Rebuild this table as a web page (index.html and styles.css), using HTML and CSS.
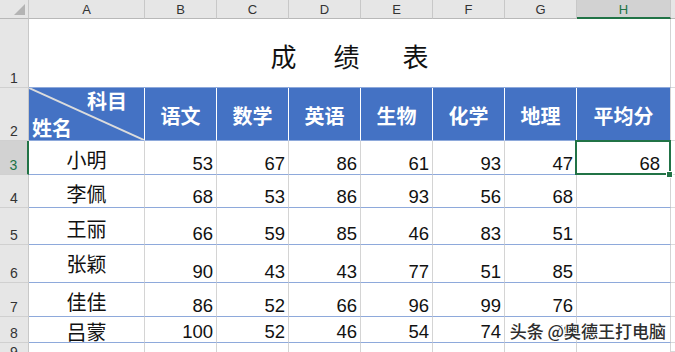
FILE: index.html
```html
<!DOCTYPE html>
<html lang="zh">
<head>
<meta charset="utf-8">
<title>成绩表</title>
<link rel="stylesheet" href="styles.css">
</head>
<body>
<div class="sheet">
  <div class="corner"><svg width="28" height="18" viewBox="0 0 28 18"><polygon points="25,4 25,15 14,15" fill="#b4b4b4"/></svg></div>
  <div class="ch">A</div><div class="ch">B</div><div class="ch">C</div><div class="ch">D</div><div class="ch">E</div><div class="ch">F</div><div class="ch">G</div><div class="ch sel-col">H</div><div class="ch ch-last"></div>

  <div class="rh">1</div>
  <div class="title"><span>成</span><span class="t2">绩</span><span class="t3">表</span></div>
  <div class="c blank"></div>

  <div class="rh">2</div>
  <div class="hd diag">
    <svg class="diag-line" viewBox="0 0 115 52" preserveAspectRatio="none"><line x1="0" y1="0" x2="115" y2="52" stroke="#dcdcdc" stroke-width="2"/></svg>
    <span class="diag-top">科目</span>
    <span class="diag-bot">姓名</span>
  </div>
  <div class="hd">语文</div><div class="hd">数学</div><div class="hd">英语</div><div class="hd">生物</div><div class="hd">化学</div><div class="hd">地理</div><div class="hd hd-last">平均分</div>
  <div class="c blank"></div>

  <div class="rh sel-row">3</div>
  <div class="c name">小明</div><div class="c num">53</div><div class="c num">67</div><div class="c num">86</div><div class="c num">61</div><div class="c num">93</div><div class="c num">47</div><div class="c num avg">68</div><div class="c blank"></div>

  <div class="rh">4</div>
  <div class="c name">李佩</div><div class="c num">68</div><div class="c num">53</div><div class="c num">86</div><div class="c num">93</div><div class="c num">56</div><div class="c num">68</div><div class="c num avg"></div><div class="c blank"></div>

  <div class="rh">5</div>
  <div class="c name">王丽</div><div class="c num">66</div><div class="c num">59</div><div class="c num">85</div><div class="c num">46</div><div class="c num">83</div><div class="c num">51</div><div class="c num avg"></div><div class="c blank"></div>

  <div class="rh">6</div>
  <div class="c name name-high">张颖</div><div class="c num">90</div><div class="c num">43</div><div class="c num">43</div><div class="c num">77</div><div class="c num">51</div><div class="c num">85</div><div class="c num avg"></div><div class="c blank"></div>

  <div class="rh">7</div>
  <div class="c name">佳佳</div><div class="c num">86</div><div class="c num">52</div><div class="c num">66</div><div class="c num">96</div><div class="c num">99</div><div class="c num">76</div><div class="c num avg"></div><div class="c blank"></div>

  <div class="rh">8</div>
  <div class="c name">吕蒙</div><div class="c num">100</div><div class="c num">52</div><div class="c num">46</div><div class="c num">54</div><div class="c num">74</div><div class="c num">76</div><div class="c num avg"></div><div class="c blank"></div>

  <div class="rh rh-cut">9</div>
  <div class="c e"></div><div class="c e"></div><div class="c e"></div><div class="c e"></div><div class="c e"></div><div class="c e"></div><div class="c e"></div><div class="c e"></div><div class="c blank"></div>

  <div class="selection"></div>
  <div class="handle"></div>
  <div class="watermark">头条 @奥德王打电脑</div>
</div>
</body>
</html>
```

FILE: styles.css
```css
html, body {
  margin: 0;
  padding: 0;
  background: #ffffff;
}
body {
  width: 675px;
  height: 352px;
  overflow: hidden;
  font-family: "Liberation Sans", "Noto Sans CJK SC", sans-serif;
}
.sheet {
  position: relative;
  height: 352px;
  overflow: hidden;
  display: grid;
  grid-template-columns: 29px 116px repeat(6, 72px) 94px 1fr;
  grid-template-rows: 19px 69px 53px 34px 33px 37px 38px 34px 26px 9px;
}
.sheet > div {
  box-sizing: border-box;
}
.corner {
  background: #e6e6e6;
  border-right: 1px solid #c8c8c8;
  border-bottom: 1px solid #b8b8b8;
}
.corner svg { display: block; }
.ch {
  background: #e6e6e6;
  border-right: 1px solid #c8c8c8;
  border-bottom: 1px solid #b8b8b8;
  font-size: 13px;
  color: #333;
  display: flex;
  align-items: center;
  justify-content: center;
  padding-top: 1px;
}
.ch-last { border-right: none; }
.sel-col {
  background: #d2d2d2;
  color: #217346;
  border-bottom: 2px solid #217346;
}
.rh {
  background: #e6e6e6;
  border-right: 1px solid #c8c8c8;
  border-bottom: 1px solid #d0d0d0;
  font-size: 14px;
  line-height: 16px;
  color: #333;
  display: flex;
  align-items: flex-end;
  justify-content: center;
  padding-bottom: 1px;
}
.rh-cut {
  align-items: flex-start;
  padding-top: 1px;
  border-bottom: none;
}
.sel-row {
  background: #d2d2d2;
  color: #217346;
  border-right: 2px solid #217346;
}
.title {
  grid-column: 2 / 10;
  border-right: 1px solid #d4d4d4;
  border-bottom: 1px solid #8ea9db;
  display: flex;
  align-items: center;
  justify-content: center;
  padding-top: 4px;
  font-family: "Noto Sans CJK SC", sans-serif;
  font-size: 26px;
  color: #111;
}
.title .t2 { margin-left: 37px; }
.title .t3 { margin-left: 43px; }
.c {
  border-right: 1px solid #d4d4d4;
  border-bottom: 1px solid #8ea9db;
}
.blank {
  border-right: none;
  border-bottom: 1px solid #dadada;
}
.hd {
  background: #4472c4;
  border-right: 1px solid #ffffff;
  border-bottom: 1px solid #8ea9db;
  color: #ffffff;
  font-family: "Noto Sans CJK SC", sans-serif;
  font-weight: bold;
  font-size: 20px;
  display: flex;
  align-items: center;
  justify-content: center;
  padding-top: 3px;
}
.hd-last { border-right: 1px solid #d4d4d4; }
.diag {
  position: relative;
  display: block;
  padding: 0;
}
.diag-line {
  position: absolute;
  left: 0;
  top: 0;
  width: 115px;
  height: 52px;
}
.diag-top {
  position: absolute;
  right: 17px;
  top: 1px;
  line-height: 24px;
}
.diag-bot {
  position: absolute;
  left: 3px;
  bottom: 0;
  line-height: 24px;
}
.name {
  display: flex;
  align-items: center;
  justify-content: center;
  padding-top: 5px;
  font-family: "Noto Sans CJK SC", sans-serif;
  font-size: 20px;
  line-height: 24px;
  color: #111;
}
.name-high { padding-top: 1px; }
.num {
  display: flex;
  align-items: flex-end;
  justify-content: flex-end;
  padding-right: 3px;
  font-size: 18.5px;
  line-height: 21px;
  color: #111;
}
.avg { padding-right: 10px; }
.e { border-bottom: none; }
.selection {
  position: absolute;
  left: 575px;
  top: 140px;
  width: 96px;
  height: 35px;
  box-sizing: border-box;
  border: 2px solid #217346;
}
.handle {
  position: absolute;
  left: 666px;
  top: 171px;
  width: 7px;
  height: 7px;
  box-sizing: border-box;
  background: #217346;
  border: 1px solid #ffffff;
}
.watermark {
  position: absolute;
  right: 9px;
  top: 321px;
  font-family: "Noto Sans CJK SC", sans-serif;
  font-size: 17px;
  font-weight: 500;
  line-height: 20px;
  color: #2e2e2e;
  text-shadow: 1px 0 0 #fff, -1px 0 0 #fff, 0 1px 0 #fff, 0 -1px 0 #fff, 1px 1px 0 #fff, -1px -1px 0 #fff, 2px 0 0 #fff;
}
```
